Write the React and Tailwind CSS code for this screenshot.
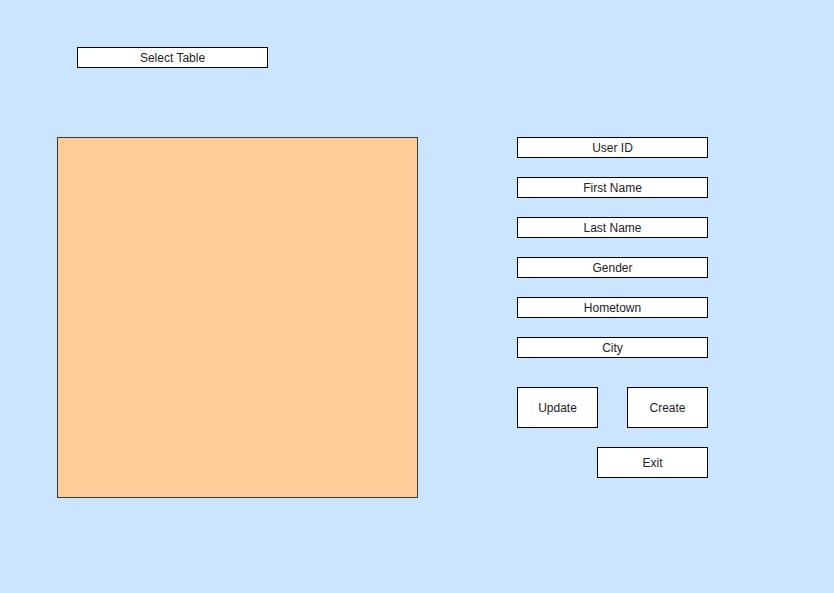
export default function App() {
  const fields = ["User ID", "First Name", "Last Name", "Gender", "Hometown", "City"];
  const box = "border border-black bg-white flex items-center justify-center text-[12px] text-[#222]";
  return (
    <div
      className="w-[834px] h-[593px] bg-[#cce5ff] overflow-hidden"
      style={{ fontFamily: '"Liberation Sans", Arial, sans-serif' }}
    >
      <div className="pt-[47px] pl-[77px]">
        <div className={`${box} w-[191px] h-[21px]`}>Select Table</div>
      </div>
      <div className="flex pl-[57px] mt-[69px]">
        <div className="w-[361px] h-[361px] bg-[#ffcc99] border border-[#36393d]" />
        <div className="ml-[99px] flex flex-col w-[191px]">
          <div className="flex flex-col gap-[19px]">
            {fields.map((f) => (
              <div key={f} className={`${box} w-[191px] h-[21px]`}>{f}</div>
            ))}
          </div>
          <div className="flex justify-between mt-[29px]">
            <div className={`${box} w-[81px] h-[41px]`}>Update</div>
            <div className={`${box} w-[81px] h-[41px]`}>Create</div>
          </div>
          <div className="flex justify-end mt-[19px]">
            <div className={`${box} w-[111px] h-[31px]`}>Exit</div>
          </div>
        </div>
      </div>
    </div>
  );
}
